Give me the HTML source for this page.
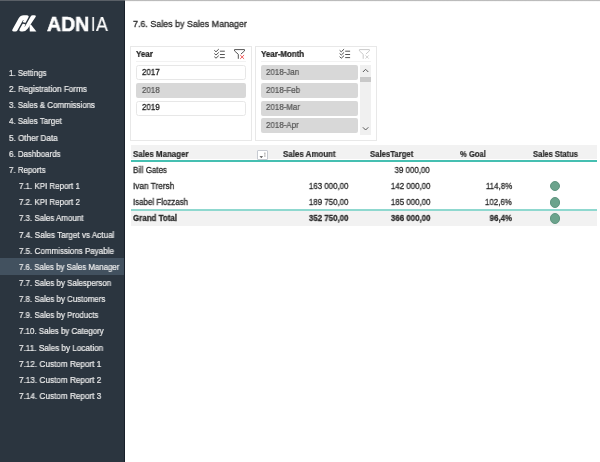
<!DOCTYPE html>
<html lang="en">
<head>
<meta charset="utf-8">
<title>7.6. Sales by Sales Manager</title>
<style>
html,body{margin:0;padding:0;}
body{-webkit-text-stroke:.22px;width:600px;height:462px;overflow:hidden;background:#fff;position:relative;font-family:"Liberation Sans",sans-serif;color:#333;}
.abs{position:absolute;}
#side{position:absolute;left:0;top:0;width:125px;height:462px;background:#2b353f;}
#side .edge{position:absolute;left:123.7px;top:0;width:1.3px;height:462px;background:#18202a;}
#topstrip{position:absolute;left:125px;top:0;width:475px;height:2px;background:linear-gradient(#b9b9b9 0,#bdbdbd 45%,#f4f4f4 55%,#fafafa 100%);}
#topstrip2{position:absolute;left:0;top:0;width:125px;height:.9px;background:#5a6067;}
.t{display:inline-block;white-space:pre;transform-origin:0 50%;transform:scaleX(.933);will-change:transform;}
.r .t{transform-origin:100% 50%;}
.mi{position:absolute;left:0;width:125px;height:16px;line-height:16px;font-size:8.5px;color:#ededed;white-space:nowrap;}
.mi .t{position:absolute;left:8.7px;top:0;}
.mi.sel .t{top:.5px;}
.mi.sub .t{left:18.7px;}
.mi.sel{background:#42515f;width:123.8px;height:16.3px;}
.lg{position:absolute;top:11.7px;font-size:20.4px;line-height:24px;color:#fff;white-space:nowrap;}
#title{position:absolute;left:133.3px;top:15.9px;font-size:9.4px;line-height:16px;color:#2a2a2a;white-space:nowrap;-webkit-text-stroke:.3px #2a2a2a;}
#title .t{transform:scaleX(.95);}
.slicer{position:absolute;top:46px;height:94.5px;width:122px;border:1px solid #e8e8e8;box-sizing:border-box;background:#fff;}
.slicer .hd{position:absolute;left:5.3px;top:-1.4px;font-size:8.5px;font-weight:bold;line-height:16px;color:#222;white-space:nowrap;}
.slicer .div{position:absolute;left:5px;right:5px;top:13.9px;height:1px;background:#f2f2f2;}
.it{position:absolute;height:15px;box-sizing:border-box;border-radius:2px;font-size:8.5px;line-height:15px;white-space:nowrap;}
.it .t{position:absolute;left:5.4px;top:-.2px;}
.it.on{background:#fff;border:1px solid #e7e7e7;border-radius:2.5px;color:#1e1e1e;-webkit-text-stroke:.32px #1e1e1e;}
.it.on .t{left:4.4px;top:-1.2px;}
.it.off{background:#d8d8d8;color:#555;}
.th{position:absolute;top:146px;height:16px;line-height:16px;font-size:8.5px;font-weight:bold;color:#2c2c2c;white-space:nowrap;}
.td{position:absolute;height:16px;line-height:16px;font-size:8.5px;color:#262626;-webkit-text-stroke:.27px #262626;white-space:nowrap;}
.r{text-align:right;}
.b{font-weight:bold;color:#2c2c2c;}
.dot{position:absolute;width:10.4px;height:10.4px;border-radius:50%;background:#6ba38c;box-sizing:border-box;border:1px solid #5e947f;}
</style>
</head>
<body>
<div id="side">
  <div class="edge"></div>
  <svg class="abs" style="left:9px;top:12px" width="30" height="23" viewBox="9 12 30 23">
    <g fill="#fff">
      <path d="M12.56 29.30 Q11.40 31.40 13.80 31.40 L15.40 31.40 Q16.80 31.40 17.48 30.17 L22.67 20.74 Q22.91 20.30 23.35 20.06 L23.39 20.04 Q23.83 19.80 23.59 20.24 L22.80 21.66 Q22.56 22.10 23.04 22.23 L24.99 22.77 Q25.47 22.90 25.71 22.46 L28.26 17.83 Q29.71 15.20 26.71 15.20 L23.71 15.20 Q20.31 15.20 18.67 18.18 Z"/>
      <path d="M35.39 17.20 Q36.71 15.20 34.31 15.20 L32.71 15.20 Q31.31 15.20 30.63 16.43 L25.44 25.86 Q25.20 26.30 24.76 26.54 L24.72 26.56 Q24.28 26.80 24.52 26.36 L25.31 24.94 Q25.55 24.50 25.07 24.37 L23.12 23.83 Q22.64 23.70 22.40 24.14 L19.85 28.77 Q18.40 31.40 21.40 31.40 L22.60 31.40 Q26.00 31.40 27.88 28.56 Z"/>
      <path d="M36.4 31.4 L30.7 24.2 L29.5 26 L29.8 31.4 Z"/>
    </g>
  </svg>
  <div class="lg" style="left:46.9px;font-weight:bold;-webkit-text-stroke:.55px #fff;"><span class="t" style="transform:scaleX(.955)">ADN</span></div>
  <div class="lg" style="left:91.4px;"><span class="t" style="transform:scaleX(.8)">I</span></div>
  <div class="lg" style="left:96px;"><span class="t" style="transform:scaleX(.87)">A</span></div>

  <div class="mi" style="top:65px"><span class="t">1. Settings</span></div>
  <div class="mi" style="top:81.15px"><span class="t" style="transform:scaleX(0.959)">2. Registration Forms</span></div>
  <div class="mi" style="top:97.3px"><span class="t">3. Sales &amp; Commissions</span></div>
  <div class="mi" style="top:113.45px"><span class="t">4. Sales Target</span></div>
  <div class="mi" style="top:129.6px"><span class="t" style="transform:scaleX(0.954)">5. Other Data</span></div>
  <div class="mi" style="top:145.75px"><span class="t">6. Dashboards</span></div>
  <div class="mi" style="top:161.9px"><span class="t">7. Reports</span></div>
  <div class="mi sub" style="top:178.05px"><span class="t">7.1. KPI Report 1</span></div>
  <div class="mi sub" style="top:194.2px"><span class="t">7.2. KPI Report 2</span></div>
  <div class="mi sub" style="top:210.35px"><span class="t">7.3. Sales Amount</span></div>
  <div class="mi sub" style="top:226.5px"><span class="t" style="transform:scaleX(0.953)">7.4. Sales Target vs Actual</span></div>
  <div class="mi sub" style="top:242.65px"><span class="t" style="transform:scaleX(0.943)">7.5. Commissions Payable</span></div>
  <div class="mi sub sel" style="top:258.3px"><span class="t" style="transform:scaleX(0.923)">7.6. Sales by Sales Manager</span></div>
  <div class="mi sub" style="top:274.95px"><span class="t">7.7. Sales by Salesperson</span></div>
  <div class="mi sub" style="top:291.1px"><span class="t">7.8. Sales by Customers</span></div>
  <div class="mi sub" style="top:307.25px"><span class="t">7.9. Sales by Products</span></div>
  <div class="mi sub" style="top:323.4px"><span class="t">7.10. Sales by Category</span></div>
  <div class="mi sub" style="top:339.55px"><span class="t" style="transform:scaleX(0.959)">7.11. Sales by Location</span></div>
  <div class="mi sub" style="top:355.7px"><span class="t" style="transform:scaleX(0.962)">7.12. Custom Report 1</span></div>
  <div class="mi sub" style="top:371.85px"><span class="t" style="transform:scaleX(0.962)">7.13. Custom Report 2</span></div>
  <div class="mi sub" style="top:388px"><span class="t" style="transform:scaleX(0.962)">7.14. Custom Report 3</span></div>
</div>
<div id="topstrip"></div><div id="topstrip2"></div>

<div id="title"><span class="t">7.6. Sales by Sales Manager</span></div>

<!-- Year slicer -->
<div class="slicer" style="left:130px;">
  <div class="hd"><span class="t">Year</span></div>
  <svg class="abs" style="left:-1px;top:-1px" width="122" height="94" viewBox="130 46 122 94">
    <g fill="none" stroke="#4a4a4a" stroke-width="0.95">
      <path d="M214.3 50.3 L216 51.8 L218.8 49.1 M214.3 53.5 L216 55 L218.8 52.4 M214.3 56.7 L216 58.2 L218.8 55.6"/>
      <path d="M219.9 51.2 H224.8 M219.9 54.5 H224.8 M219.9 57.6 H224.8"/>
      <path d="M238.3 58.8 V54.3 L234.5 50.9 V49.6 H244.5 V50.9 L241 54"/>
    </g>
    <path d="M240.2 55 L244.1 58.9 M244.1 55 L240.2 58.9" fill="none" stroke="#ec5050" stroke-width="0.95"/>
  </svg>
  <div class="div"></div>
  <div class="it on" style="left:5.3px;top:18.1px;width:110px;"><span class="t">2017</span></div>
  <div class="it off" style="left:5.3px;top:35.8px;width:110px;"><span class="t">2018</span></div>
  <div class="it on" style="left:5.3px;top:53.5px;width:110px;"><span class="t">2019</span></div>
</div>
<!-- Year-Month slicer -->
<div class="slicer" style="left:255px;">
  <div class="hd"><span class="t">Year-Month</span></div>
  <div class="div"></div>
  <div class="it off" style="left:5px;top:18.1px;width:96.7px;"><span class="t">2018-Jan</span></div>
  <div class="it off" style="left:5px;top:35.8px;width:96.7px;"><span class="t">2018-Feb</span></div>
  <div class="it off" style="left:5px;top:53.5px;width:96.7px;"><span class="t">2018-Mar</span></div>
  <div class="it off" style="left:5px;top:71.2px;width:96.7px;"><span class="t">2018-Apr</span></div>
  <div class="abs" style="left:104.3px;top:18.1px;width:10.7px;height:69.5px;background:#f0f0f0;"></div>
  <div class="abs" style="left:104.3px;top:29.8px;width:10.7px;height:5px;background:#c9c9c9;"></div>
  <svg class="abs" style="left:-1px;top:-1px" width="122" height="94" viewBox="255 46 122 94">
    <g fill="none" stroke="#4a4a4a" stroke-width="0.95" transform="translate(125.3 0)">
      <path d="M214.3 50.3 L216 51.8 L218.8 49.1 M214.3 53.5 L216 55 L218.8 52.4 M214.3 56.7 L216 58.2 L218.8 55.6"/>
      <path d="M219.9 51.2 H224.8 M219.9 54.5 H224.8 M219.9 57.6 H224.8"/>
    </g>
    <g fill="none" stroke="#c6c6c6" stroke-width="0.95" transform="translate(124.9 0)">
      <path d="M238.3 58.8 V54.3 L234.5 50.9 V49.6 H244.5 V50.9 L241 54"/>
      <path d="M240.6 55.4 L243.8 58.6 M243.8 55.4 L240.6 58.6" stroke="#cfcfcf"/>
    </g>
    <g fill="none" stroke="#505050" stroke-width="0.95">
      <path d="M362.9 72 L365.6 69.3 L368.3 72"/>
      <path d="M362.9 127.3 L365.6 130 L368.3 127.3"/>
    </g>
  </svg>
</div>

<!-- table -->
<div class="abs" style="left:131px;top:145.4px;width:465.5px;height:13.8px;background:#f2f2f2;"></div>
<div class="abs" style="left:131px;top:160px;width:465.5px;height:1.8px;background:#45bfb1;"></div>
<div class="abs" style="left:131px;top:210.8px;width:465.5px;height:15px;background:#f2f2f2;"></div>
<div class="abs" style="left:131px;top:209px;width:465.5px;height:1.8px;background:#8fd8cf;"></div>

<div class="th" style="left:133px;"><span class="t">Sales Manager</span></div>
<div class="th" style="left:283px;"><span class="t">Sales Amount</span></div>
<div class="th" style="left:369.5px;"><span class="t" style="transform:scaleX(.91)">SalesTarget</span></div>
<div class="th" style="left:460px;"><span class="t" style="transform:scaleX(.895)">% Goal</span></div>
<div class="th" style="left:532.5px;"><span class="t" style="transform:scaleX(.89)">Sales Status</span></div>
<div class="abs" style="left:257.3px;top:150px;width:11px;height:10.2px;box-sizing:border-box;border:1px solid #c6cad1;border-radius:1px;background:#fff;"></div>
<svg class="abs" style="left:257px;top:150px" width="12" height="11" viewBox="257 150 12 11">
  <path d="M259.5 156.2 H263.1 L261.3 158 Z" fill="#444"/>
  <path d="M264.9 152.6 V156.9" stroke="#8a8a8a" stroke-width="1" stroke-dasharray="1.3 .5" fill="none"/>
</svg>

<div class="td" style="left:133px;top:162.15px;"><span class="t">Bill Gates</span></div>
<div class="td" style="left:133px;top:178.25px;"><span class="t" style="transform:scaleX(.971)">Ivan Trersh</span></div>
<div class="td" style="left:133px;top:194.3px;"><span class="t">Isabel Flozzash</span></div>
<div class="td b" style="left:133px;top:210.3px;"><span class="t">Grand Total</span></div>

<div class="td r" style="left:280px;width:68.4px;top:178.25px;"><span class="t">163 000,00</span></div>
<div class="td r" style="left:280px;width:68.4px;top:194.3px;"><span class="t">189 750,00</span></div>
<div class="td r b" style="left:280px;width:68.4px;top:210.3px;"><span class="t">352 750,00</span></div>

<div class="td r" style="left:360px;width:70.3px;top:162.15px;"><span class="t">39 000,00</span></div>
<div class="td r" style="left:360px;width:70.3px;top:178.25px;"><span class="t">142 000,00</span></div>
<div class="td r" style="left:360px;width:70.3px;top:194.3px;"><span class="t">185 000,00</span></div>
<div class="td r b" style="left:360px;width:70.3px;top:210.3px;"><span class="t">366 000,00</span></div>

<div class="td r" style="left:450px;width:62.3px;top:178.25px;"><span class="t">114,8%</span></div>
<div class="td r" style="left:450px;width:62.3px;top:194.3px;"><span class="t">102,6%</span></div>
<div class="td r b" style="left:450px;width:62.3px;top:210.3px;"><span class="t">96,4%</span></div>

<div class="dot" style="left:549.8px;top:181px;"></div>
<div class="dot" style="left:549.8px;top:197.2px;"></div>
<div class="dot" style="left:549.8px;top:213.2px;"></div>
</body>
</html>
